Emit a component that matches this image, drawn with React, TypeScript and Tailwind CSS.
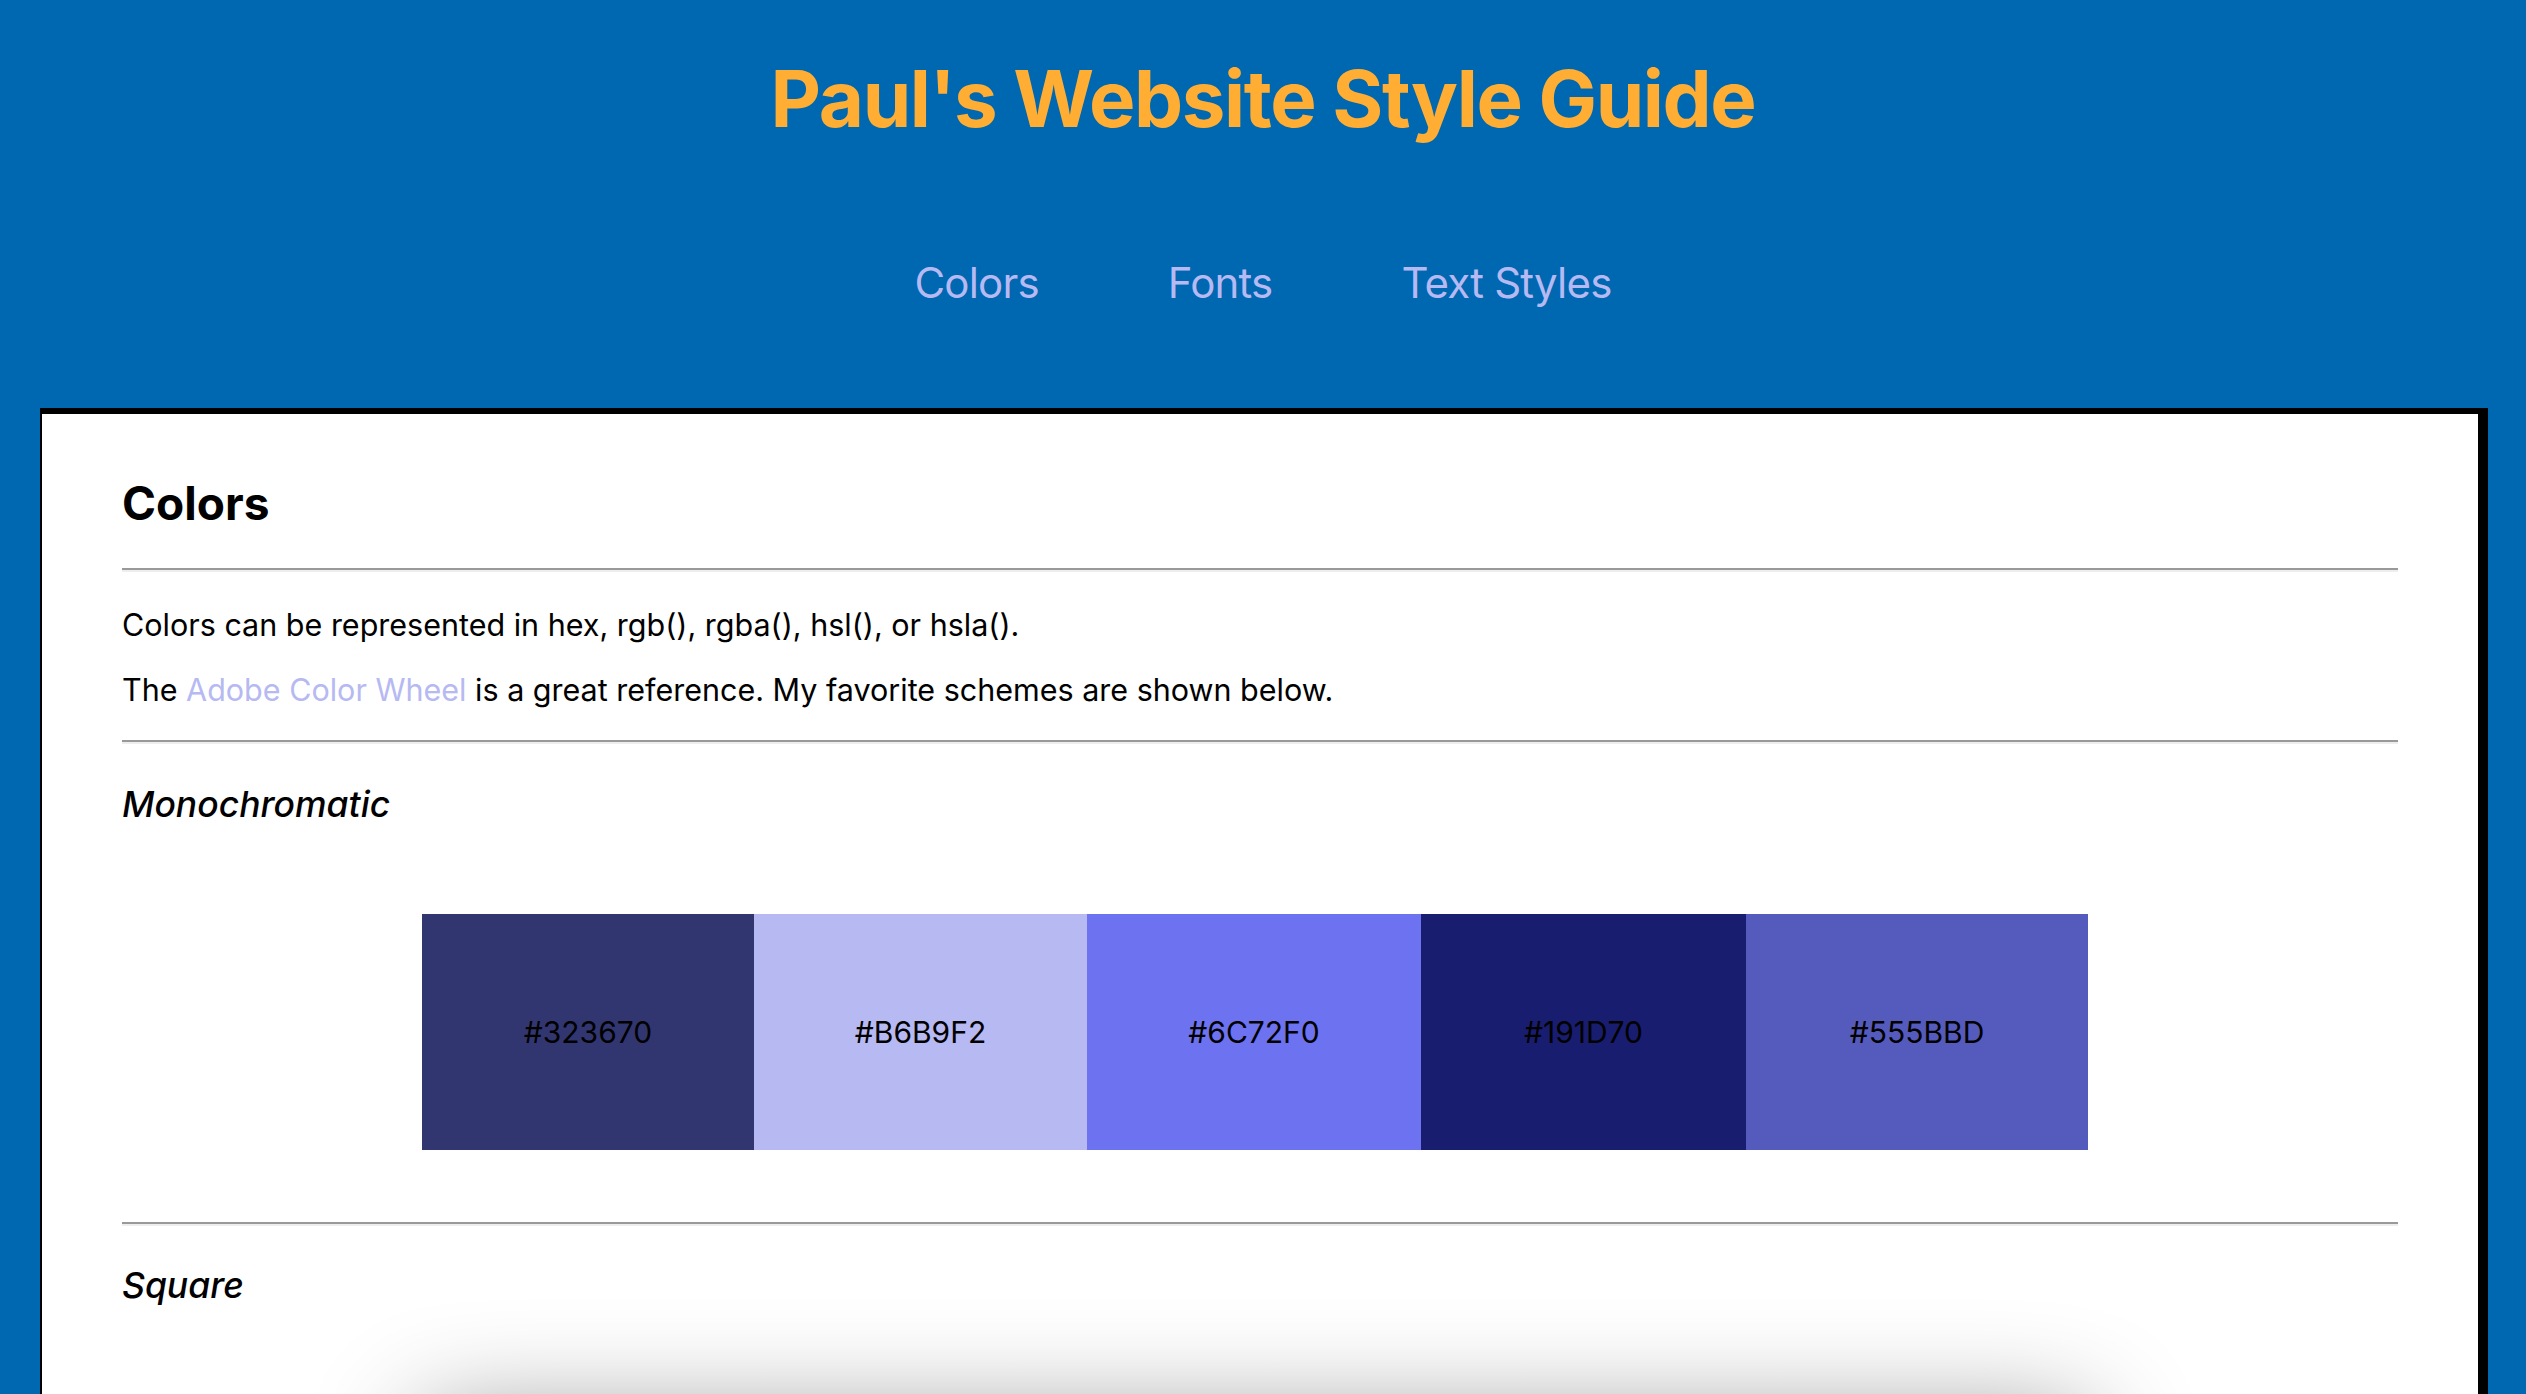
const monochromatic = [
  { hex: '#323670', className: 'bg-[#323670] w-[332px]' },
  { hex: '#B6B9F2', className: 'bg-[#B6B9F2] w-[333px]' },
  { hex: '#6C72F0', className: 'bg-[#6C72F0] w-[334px]' },
  { hex: '#191D70', className: 'bg-[#191D70] w-[325px]' },
  { hex: '#555BBD', className: 'bg-[#555BBD] w-[342px]' },
];

const square = [
  { hex: '#323670', className: 'bg-[#323670] w-[332px]' },
  { hex: '#70325F', className: 'bg-[#70325F] w-[333px]' },
  { hex: '#706C32', className: 'bg-[#706C32] w-[334px]' },
  { hex: '#32704F', className: 'bg-[#32704F] w-[325px]' },
  { hex: '#555BBD', className: 'bg-[#555BBD] w-[342px]' },
];

function Divider() {
  return <hr className="border-0 border-t-2 border-b-2 border-t-[#999999] border-b-[#eeeeee]" />;
}

function Swatch({ hex, className }: { hex: string; className: string }) {
  return (
    <div className={`flex h-[236px] items-center justify-center text-[30px] text-black ${className}`}>
      {hex}
    </div>
  );
}

export default function App() {
  return (
    <div className="min-h-[1394px] bg-[#0067B1] font-['Inter','Noto_Sans',sans-serif] text-black">
      {/* ---------- Header ---------- */}
      <header className="pt-[51px] pb-[99px] text-center">
        <h1 className="text-[78px] font-bold leading-[96px] tracking-[-1.4px] text-[#FFAD33]">
          Paul's Website Style Guide
        </h1>
        <nav className="mt-[110px] flex justify-center gap-[129px] text-[42px] leading-[52px] tracking-[-0.8px] text-[#B6B9F2]">
          <a href="#colors">Colors</a>
          <a href="#fonts">Fonts</a>
          <a href="#text-styles">Text Styles</a>
        </nav>
      </header>

      {/* ---------- Card ---------- */}
      <main className="ml-[40px] mr-[38px] overflow-hidden border-t-[6px] border-l-2 border-r-[10px] border-black bg-white px-[80px] pt-[61px] pb-[200px]">
        <section id="colors">
          <h2 className="text-[46px] font-bold leading-[56px]">Colors</h2>
          <div className="mt-[37px]">
            <Divider />
          </div>
          <p className="mt-[35px] text-[30.5px] leading-[36px]">
            Colors can be represented in hex, rgb(), rgba(), hsl(), or hsla().
          </p>
          <p className="mt-[29px] text-[30.5px] leading-[36px]">
            The{' '}
            <a href="#" className="text-[#B6B9F2]">
              Adobe Color Wheel
            </a>{' '}
            is a great reference. My favorite schemes are shown below.
          </p>
          <div className="mt-[32px]">
            <Divider />
          </div>

          <h3 className="mt-[40px] text-[35.5px] font-medium italic leading-[42px]">Monochromatic</h3>
          <div className="mt-[88px] flex justify-center pr-[10px]">
            {monochromatic.map((s) => (
              <Swatch key={s.hex} hex={s.hex} className={s.className} />
            ))}
          </div>

          <div className="mt-[72px]">
            <Divider />
          </div>
          <h3 className="mt-[39px] text-[35.5px] font-medium italic leading-[42px]">Square</h3>
          <div className="mt-[113px] flex justify-center pr-[10px]">
            <div className="flex shadow-[0_0_110px_rgba(0,0,0,0.45)]">
              {square.map((s) => (
                <Swatch key={s.hex} hex={s.hex} className={s.className} />
              ))}
            </div>
          </div>
        </section>
      </main>
    </div>
  );
}
